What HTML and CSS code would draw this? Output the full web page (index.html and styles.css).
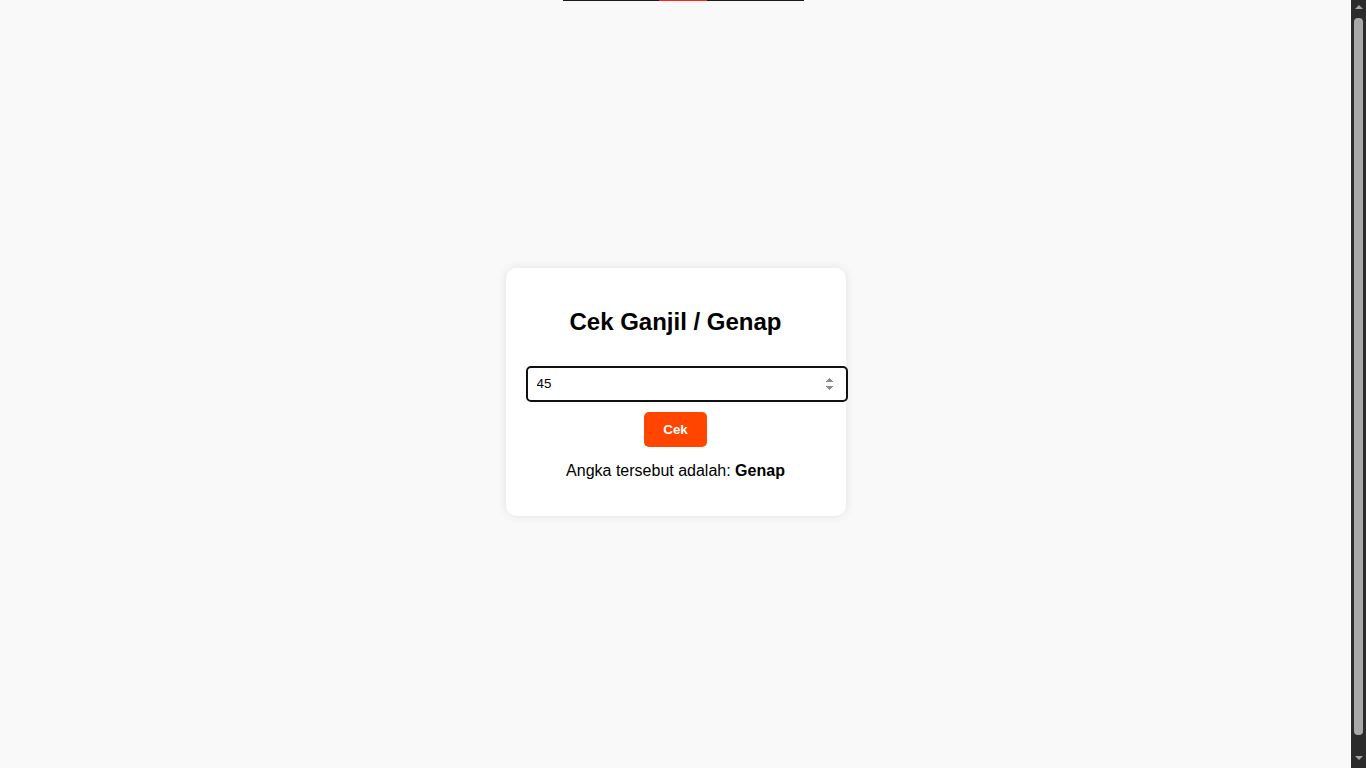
FILE: index.html
```html
<!DOCTYPE html>
<html lang="id">
<head>
<meta charset="utf-8">
<title>Cek Ganjil / Genap</title>
<link rel="stylesheet" href="styles.css">
</head>
<body>
<div class="topline"><span class="seg-dark"></span><span class="seg-red"></span><span class="seg-dark2"></span></div>
<div class="card">
  <h2 class="title">Cek Ganjil / Genap</h2>
  <input class="num" type="number" value="45" autofocus>
  <button class="btn" type="button">Cek</button>
  <p class="result">Angka tersebut adalah: <strong>Genap</strong></p>
</div>
<div class="scrollbar" aria-hidden="true">
  <span class="sb-arrow sb-up"></span>
  <span class="sb-thumb"></span>
  <span class="sb-arrow sb-down"></span>
</div>
</body>
</html>
```

FILE: styles.css
```css
html {
  background: #f9f9f9;
  overflow: hidden;
}
body {
  margin: 8px 23px 8px 8px;
  height: 100vh;
  display: flex;
  justify-content: center;
  align-items: center;
  background: #f9f9f9;
  font-family: "Liberation Sans", Arial, sans-serif;
  color: #000;
}
.topline {
  position: absolute;
  top: 0;
  left: 563px;
  height: 1px;
  display: flex;
}
.seg-dark { width: 96px; background: #1a1a1a; }
.seg-red { width: 48px; background: #ff2020; }
.seg-dark2 { width: 97px; background: #1a1a1a; }
.card {
  width: 300px;
  padding: 20px;
  background: #fff;
  border-radius: 10px;
  box-shadow: 0 0 10px rgba(0, 0, 0, 0.1);
  text-align: center;
}
.title {
  font-size: 24px;
  font-weight: bold;
  margin: 20px 0 30px;
}
.num {
  display: block;
  width: 100%;
  padding: 10px;
  font-family: "Liberation Sans", Arial, sans-serif;
  font-size: 13.33px;
  border: 1px solid #ccc;
  border-radius: 5px;
  margin: 0;
  box-sizing: content-box;
  height: 14px;
  line-height: 14px;
  text-align: left;
  color: #000;
}
.num:focus {
  outline: none;
  border: 2px solid #101010;
  padding: 9px;
}
.btn {
  margin-top: 10px;
  padding: 10px 19px;
  background: #ff4500;
  color: #fff;
  border: none;
  border-radius: 5px;
  font-family: "Liberation Sans", Arial, sans-serif;
  font-size: 13.33px;
  font-weight: bold;
  line-height: 15px;
}
.result {
  font-size: 16px;
  margin: 15px 0 16px;
}
.scrollbar {
  position: fixed;
  top: 0;
  right: 0;
  width: 15px;
  height: 100vh;
  background: #2b2b2b;
  display: flex;
  flex-direction: column;
  align-items: center;
  box-sizing: border-box;
  padding: 5px 0 8px;
}
.sb-arrow {
  width: 0;
  height: 0;
  border-left: 4px solid transparent;
  border-right: 4px solid transparent;
}
.sb-up {
  border-bottom: 4px solid #a3a3a3;
}
.sb-down {
  border-top: 4px solid #a3a3a3;
}
.sb-thumb {
  width: 9px;
  flex: 1;
  margin: 9px 0 21px;
  background: #a8a8a8;
  border-radius: 4px;
}
```
